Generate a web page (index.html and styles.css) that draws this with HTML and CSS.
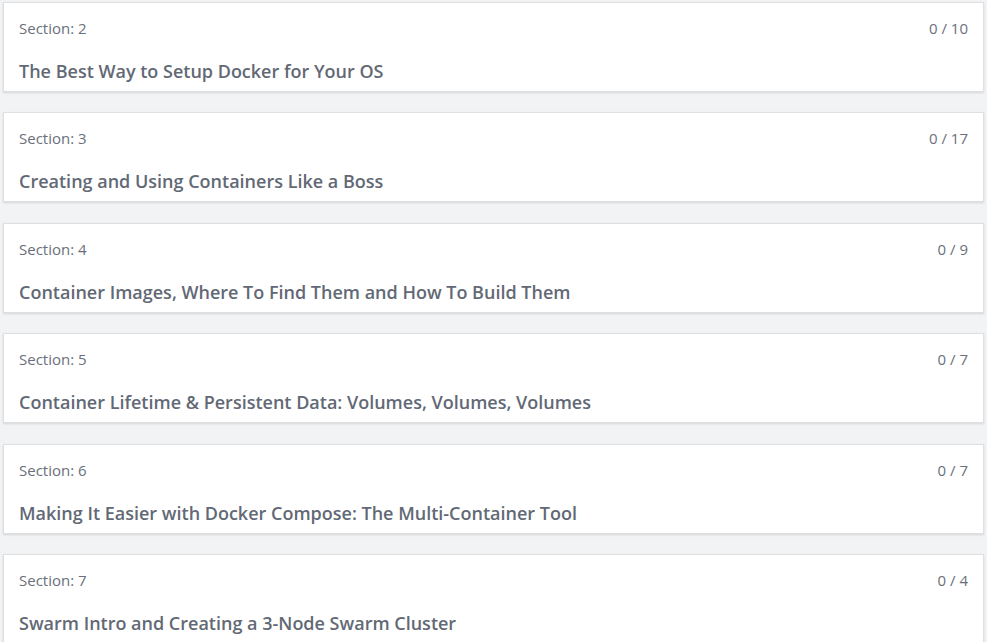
FILE: index.html
```html
<!DOCTYPE html>
<html>
<head>
<meta charset="utf-8">
<link rel="stylesheet" href="styles.css">
</head>
<body>
<div class="list">
  <div class="card">
    <div class="row"><span class="sec">Section: 2</span><span class="count">0 / 10</span></div>
    <div class="title">The Best Way to Setup Docker for Your OS</div>
  </div>
  <div class="card">
    <div class="row"><span class="sec">Section: 3</span><span class="count">0 / 17</span></div>
    <div class="title">Creating and Using Containers Like a Boss</div>
  </div>
  <div class="card">
    <div class="row"><span class="sec">Section: 4</span><span class="count">0 / 9</span></div>
    <div class="title">Container Images, Where To Find Them and How To Build Them</div>
  </div>
  <div class="card">
    <div class="row"><span class="sec">Section: 5</span><span class="count">0 / 7</span></div>
    <div class="title">Container Lifetime &amp; Persistent Data: Volumes, Volumes, Volumes</div>
  </div>
  <div class="card">
    <div class="row"><span class="sec">Section: 6</span><span class="count">0 / 7</span></div>
    <div class="title">Making It Easier with Docker Compose: The Multi-Container Tool</div>
  </div>
  <div class="card">
    <div class="row"><span class="sec">Section: 7</span><span class="count">0 / 4</span></div>
    <div class="title">Swarm Intro and Creating a 3-Node Swarm Cluster</div>
  </div>
</div>
</body>
</html>
```
FILE: styles.css
```css
html, body {
  margin: 0;
  padding: 0;
  background: #f2f3f5;
  font-family: "Open Sans", "Liberation Sans", sans-serif;
}
.list {
  display: flex;
  flex-direction: column;
  gap: 20.4px;
  padding: 2px 3px 0 3px;
}
.card {
  background: #fff;
  border: 1px solid #dedfe0;
  box-shadow: 0 1px 2px rgba(0,0,0,0.12);
  height: 90px;
  box-sizing: border-box;
  padding: 15px 15px 0 15px;
}
.row {
  display: flex;
  justify-content: space-between;
  font-size: 15px;
  line-height: 20px;
  color: #6a707b;
}
.title {
  margin-top: 21px;
  font-size: 18px;
  line-height: 24px;
  font-weight: 600;
  color: #626975;
}
```
